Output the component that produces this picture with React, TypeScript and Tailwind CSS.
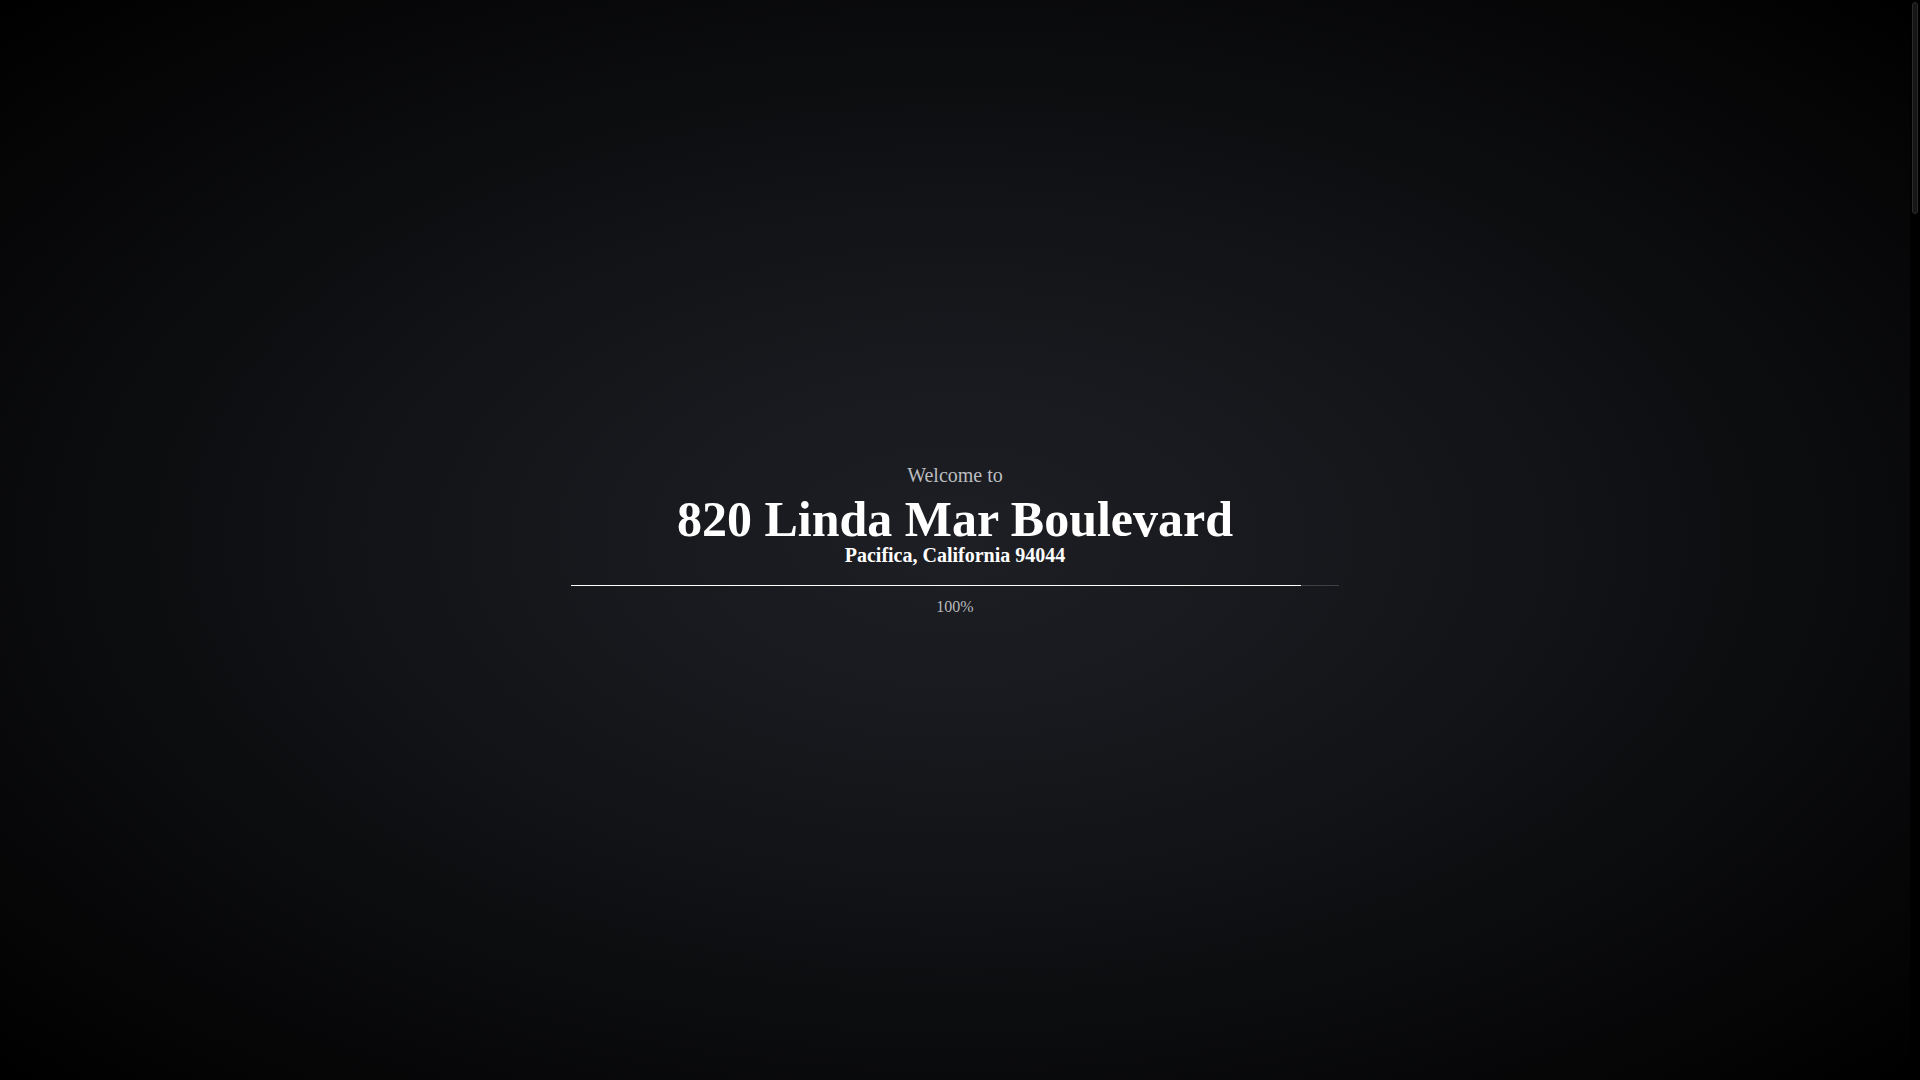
import React from 'react';

/**
 * Property tour splash — loading screen shown before the tour starts.
 */

const property = {
  greeting: 'Welcome to',
  street: '820 Linda Mar Boulevard',
  city: 'Pacifica, California 94044',
};

function Loader({ progress, shown }: { progress: number; shown: number }) {
  return (
    <div className="flex flex-col items-center">
      <div className="h-px w-[768px] bg-[#3f4043]">
        <div className="h-px bg-white" style={{ width: `${progress}%` }} />
      </div>
      <p className="mt-[11px] text-[16px] leading-[20px] text-[#b9babd]">{shown}%</p>
    </div>
  );
}

// thin page scrollbar rail on the right edge
function ScrollRail() {
  return (
    <div className="flex w-[10px] shrink-0 flex-col bg-black px-[2px] pt-[2px]">
      <div className="h-[212px] rounded-[3px] border border-[#2a2a2b] bg-[#161617]" />
    </div>
  );
}

export default function App() {
  return (
    <div className="flex h-screen overflow-hidden bg-black font-['Liberation_Serif','Times_New_Roman',serif]">
      {/* Splash */}
      <section className="flex flex-1 flex-col items-center justify-center bg-[radial-gradient(ellipse_at_center,#1d1f24_0%,#15161a_35%,#000000_100%)] text-center">
        <p className="text-[20px] leading-[24px] text-[#bcbdc0]">{property.greeting}</p>
        <h1 className="mt-2 text-[50px] font-bold leading-[48px] text-white">{property.street}</h1>
        <h2 className="text-[20px] font-bold leading-[24px] text-white">{property.city}</h2>
        <div className="mt-[18px]">
          <Loader progress={95} shown={100} />
        </div>
      </section>
      <ScrollRail />
    </div>
  );
}
